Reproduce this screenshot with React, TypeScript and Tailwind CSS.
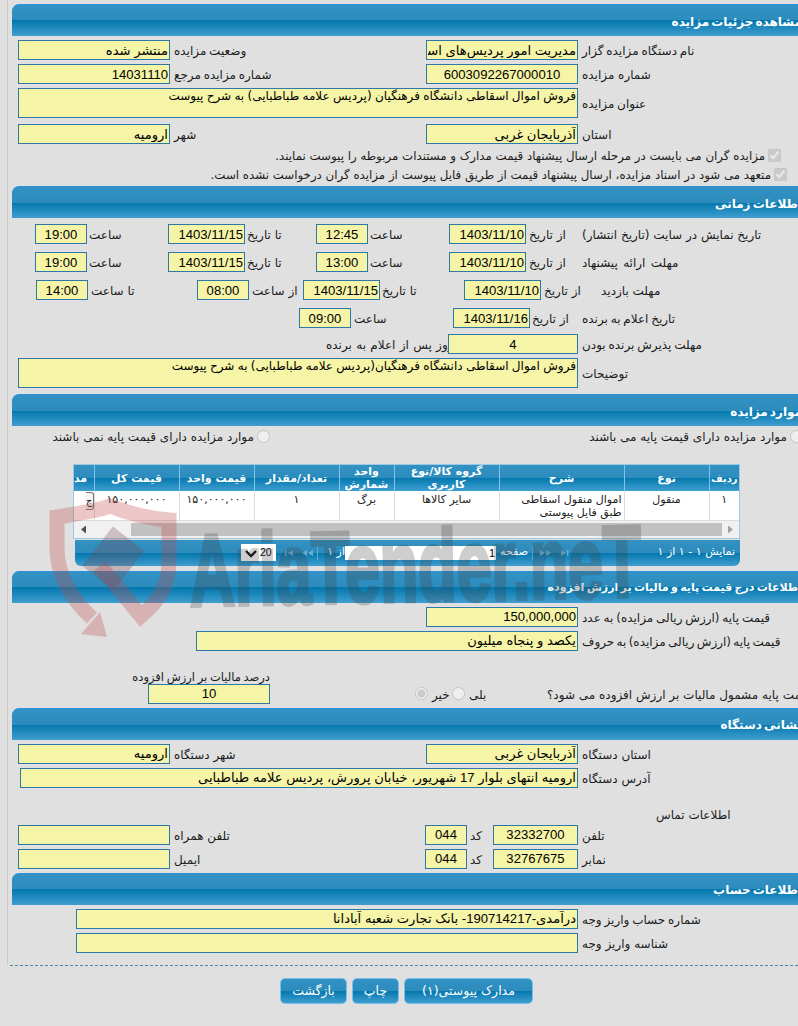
import React from 'react';

const BAR = 'bg-[linear-gradient(#3391c4,#2c8cbc_50%,#0377ae_50%,#409ecf)]';

function Header({ title, className = '', size = 'text-[12px] [word-spacing:-2px]' }: { title: string; className?: string; size?: string }) {
  return (
    <div dir="rtl" className={`ml-[4px] w-[802px] h-[32px] rounded-tl-[7px] border-t border-[#2a93dc] ${BAR} flex items-center pr-[12px] pt-[2px] text-white font-bold ${size} whitespace-nowrap ${className}`}>
      {title}
    </div>
  );
}

function F({ w, h = 'h-[20px]', v = '', c = false }: { w: string; h?: string; v?: string; c?: boolean }) {
  return (
    <input
      readOnly
      dir="rtl"
      value={v}
      className={`${w} ${h} shrink-0 border border-[#2c78a8] bg-[#f6f4a6] font-['Liberation_Sans','DejaVu_Sans',sans-serif] text-[13.1px] text-black outline-none px-[1px] ${c ? 'text-center' : 'text-right'}`}
    />
  );
}

function TA({ w, v }: { w: string; v: string }) {
  return (
    <textarea
      readOnly
      dir="rtl"
      value={v}
      className={`${w} h-[30px] shrink-0 border border-[#2c78a8] bg-[#f6f4a6] text-[12px] [word-spacing:-0.5px] leading-[14px] text-black outline-none px-[1px] resize-none overflow-hidden block`}
    />
  );
}

function L({ w = 'w-auto', children, p = 'pl-[4px]', s = '' }: { w?: string; children?: React.ReactNode; p?: string; s?: string }) {
  return (
    <div className={`${w} ${p} h-[20px] text-[12px] leading-[22px] shrink-0`}>
      <span dir="rtl" className={`inline-block whitespace-nowrap text-[#1c1c1c] ${s}`}>
        {children}
      </span>
    </div>
  );
}

function Row({ cls, children }: { cls: string; children: React.ReactNode }) {
  return <div className={`flex items-center ${cls}`}>{children}</div>;
}

function Radio({ checked = false }: { checked?: boolean }) {
  return <input type="radio" disabled checked={checked} readOnly className="m-0 w-[13px] h-[13px] shrink-0" />;
}

const thCls = `border-r border-[#7cc6ec] text-white font-bold text-[11px] leading-[13px] text-center align-middle px-[2px] ${BAR}`;
const tdCls = 'border-r border-b border-[#dcdcdc] bg-white text-[11px] leading-[13px] text-[#222] align-top pt-[2px] px-[2px]';

function Table() {
  return (
    <div className="ml-[65px] w-[667px] border border-[#9cc9e2] overflow-hidden">
      <table dir="ltr" className="table-fixed border-collapse w-[665px]">
        <colgroup>
          <col className="w-[20px]" />
          <col className="w-[85px]" />
          <col className="w-[75px]" />
          <col className="w-[85px]" />
          <col className="w-[55px]" />
          <col className="w-[105px]" />
          <col className="w-[125px]" />
          <col className="w-[85px]" />
          <col className="w-[30px]" />
        </colgroup>
        <thead>
          <tr className="h-[26px]" dir="rtl">
            <th className={`${thCls} overflow-hidden text-left !px-0`}><span className="whitespace-nowrap">مد</span></th>
            <th className={thCls}>قیمت کل</th>
            <th className={thCls}>قیمت واحد</th>
            <th className={thCls}>تعداد/مقدار</th>
            <th className={thCls}>واحد شمارش</th>
            <th className={thCls}>گروه کالا/نوع کاربری</th>
            <th className={thCls}>شرح</th>
            <th className={thCls}>نوع</th>
            <th className={`${thCls} border-r-0 !px-0 !text-[10px]`}>ردیف</th>
          </tr>
        </thead>
        <tbody>
          <tr className="h-[29px]" dir="rtl">
            <td className={`${tdCls} !p-0 overflow-hidden`}>
              <div className="mt-[1px] w-[8px] h-[18px] border border-l-0 border-[#777] rounded-r-[3px] bg-[#f4f4f4] text-[10px] leading-[16px] overflow-hidden">ج</div>
            </td>
            <td className={`${tdCls} text-center`}>۱۵۰,۰۰۰,۰۰۰</td>
            <td className={`${tdCls} text-center`}>۱۵۰,۰۰۰,۰۰۰</td>
            <td className={`${tdCls} text-center`}>۱</td>
            <td className={`${tdCls} text-center`}>برگ</td>
            <td className={`${tdCls} text-center`}>سایر کالاها</td>
            <td className={`${tdCls} text-right`}>اموال منقول اسقاطی<br />طبق فایل پیوستی</td>
            <td className={`${tdCls} text-center`}>منقول</td>
            <td className={`${tdCls} text-center border-r-0`}>۱</td>
          </tr>
        </tbody>
      </table>
      <div className="h-[17px] bg-[#f1f1f1] flex items-center">
        <svg width="57" height="17" className="shrink-0"><path d="M12 4.5 L7 8.5 L12 12.5 Z" fill="#505050" /></svg>
        <div className="w-[591px] h-[13px] bg-[#c1c1c1] shrink-0" />
        <svg width="17" height="17" className="shrink-0"><path d="M6 4.5 L11 8.5 L6 12.5 Z" fill="#a3a3a3" /></svg>
      </div>
    </div>
  );
}

function PagerIcon({ d }: { d: string }) {
  return <svg width="14" height="10" className="shrink-0"><path d={d} fill="#6fb0d4" /></svg>;
}

function Pager() {
  return (
    <div className={`mt-[1px] ml-[67px] w-[665px] h-[26px] rounded-b-[6px] ${BAR} flex items-center text-white text-[11px] whitespace-nowrap`}>
      <div className="ml-[166px] w-[35px] h-[17px] bg-white shrink-0 flex items-center text-black text-[10.5px] font-['Liberation_Sans',sans-serif]">
        <svg width="14" height="12" className="ml-[3px] shrink-0"><path d="M2 4 L7 9 L12 4" fill="none" stroke="#111" strokeWidth="2.4" /></svg>
        <span className="ml-[2px]">20</span>
      </div>
      <div className="ml-[7px]"><PagerIcon d="M2 2h1.5v6H2zM10 2v6L5 5z" /></div>
      <div className="ml-[3px]"><PagerIcon d="M7 2v6L2 5zM13 2v6L8 5z" /></div>
      <div className="ml-[3px] w-[1px] h-[14px] bg-[#5fa8cf] shrink-0" />
      <div dir="rtl" className="ml-[8px] w-[19px] shrink-0">از ۱</div>
      <div dir="rtl" className="w-[151px] h-[14px] bg-white text-black text-[11px] leading-[14px] text-right shrink-0 pr-[1px] font-['Liberation_Sans',sans-serif]">1</div>
      <div dir="rtl" className="w-[32px] shrink-0">صفحه</div>
      <div className="ml-[4px] w-[1px] h-[14px] bg-[#5fa8cf] shrink-0" />
      <div className="ml-[5px]"><PagerIcon d="M2 2v6l5-3zM8 2v6l5-3z" /></div>
      <div className="ml-[5px]"><PagerIcon d="M4 2v6l5-3zM10 2h1.5v6H10z" /></div>
      <div dir="rtl" className="ml-auto mr-[5px]">نمایش ۱ - ۱ از ۱</div>
    </div>
  );
}

function Watermark() {
  return (
    <svg width="798" height="1026" className="absolute left-0 top-0 pointer-events-none" aria-hidden="true">
      <g opacity="0.3">
        <path d="M92 618 C72 600 57 575 57 548 L57 517 C90 512 105 508 110 506 C125 512 145 518 169 520 L169 560 C169 585 160 600 141 616 L100 566" fill="none" stroke="#c04a4a" strokeWidth="15" />
        <path d="M81 634 L100 612 L107 637 Z" fill="#c04a4a" />
      </g>
      <g transform="rotate(38 112 560)" opacity="0.3">
        <rect x="92" y="533" width="40" height="50" fill="#7a4a52" />
      </g>
      <g opacity="0.25">
        <text x="190" y="606" transform="rotate(-1.2 190 606)" fontFamily="'Liberation Sans', sans-serif" fontWeight="700" fontSize="102" textLength="452" lengthAdjust="spacingAndGlyphs" fill="#3f3f3f" stroke="#3f3f3f" strokeWidth="4">
          AriaTender.neT
        </text>
      </g>
    </svg>
  );
}

function Btn({ w, cls = '', children }: { w: string; cls?: string; children: React.ReactNode }) {
  return (
    <button dir="rtl" className={`${w} ${cls} h-[26px] rounded-[5px] border border-[#74c0ea] ${BAR} text-white text-[12.5px] shrink-0`}>
      {children}
    </button>
  );
}

const cbText = 'h-[14px] flex items-center gap-[3px] text-[11.8px] text-[#1c1c1c] whitespace-nowrap';

export default function App() {
  return (
    <div className="relative w-[798px] h-[1026px] overflow-hidden bg-[#e0e0e0] font-['DejaVu_Sans','Liberation_Sans',sans-serif]">
      <div className="ml-[7px] border-l border-[#c8c8c8] pt-[4px] h-[965px] w-[900px]">
        <Header title="مشاهده جزئیات مزایده" />
        <Row cls="mt-[4px] pl-[10px]">
          <F w="w-[152px]" v="منتشر شده" /><L w="w-[256px]" s="[word-spacing:-1px]">وضعیت مزایده</L>
          <F w="w-[152px]" v="مدیریت امور پردیس‌های استان آذربایجان غربی" /><L s="[word-spacing:-1px]">نام دستگاه مزایده گزار</L>
        </Row>
        <Row cls="mt-[4px] pl-[10px]">
          <F w="w-[152px]" v="14031110" /><L w="w-[256px]" s="[word-spacing:-1px]">شماره مزایده مرجع</L>
          <F w="w-[152px]" v="6003092267000010" c /><L>شماره مزایده</L>
        </Row>
        <Row cls="mt-[4px] pl-[10px]">
          <TA w="w-[560px]" v="فروش اموال اسقاطی دانشگاه فرهنگیان (پردیس علامه طباطبایی) به شرح پیوست" /><L s="[word-spacing:-1px]">عنوان مزایده</L>
        </Row>
        <Row cls="mt-[6px] pl-[10px]">
          <F w="w-[152px]" v="ارومیه" /><L w="w-[256px]">شهر</L>
          <F w="w-[152px]" v="آذربایجان غربی" /><L>استان</L>
        </Row>
        <div dir="rtl" className={`mt-[4px] w-[773px] ${cbText}`}>
          <input type="checkbox" disabled checked readOnly className="m-0 w-[13px] h-[13px] shrink-0" />
          <span className="pt-[3px]">مزایده گران می بایست در مرحله ارسال پیشنهاد قیمت مدارک و مستندات مربوطه را پیوست نمایند.</span>
        </div>
        <div dir="rtl" className={`mt-[5px] w-[779px] ${cbText}`}>
          <input type="checkbox" disabled checked readOnly className="m-0 w-[13px] h-[13px] shrink-0" />
          <span className="pt-[3px]">متعهد می شود در اسناد مزایده، ارسال پیشنهاد قیمت از طریق فایل پیوست از مزایده گران درخواست نشده است.</span>
        </div>

        <Header title="اطلاعات زمانی" className="mt-[5px]" />
        <Row cls="mt-[6px] pl-[27px]">
          <F w="w-[52px]" v="19:00" c /><L w="w-[81px]" p="pl-[2px]">ساعت</L>
          <F w="w-[77px]" v="1403/11/15" /><L w="w-[71px]" p="pl-[2px]">تا تاریخ</L>
          <F w="w-[52px]" v="12:45" c /><L w="w-[81px]" p="pl-[2px]">ساعت</L>
          <F w="w-[77px]" v="1403/11/10" /><L w="w-[56px]" p="pl-[3px]">از تاریخ</L>
          <L p="pl-0">تاریخ نمایش در سایت (تاریخ انتشار)</L>
        </Row>
        <Row cls="mt-[8px] pl-[27px]">
          <F w="w-[52px]" v="19:00" c /><L w="w-[81px]" p="pl-[2px]">ساعت</L>
          <F w="w-[77px]" v="1403/11/15" /><L w="w-[71px]" p="pl-[2px]">تا تاریخ</L>
          <F w="w-[52px]" v="13:00" c /><L w="w-[81px]" p="pl-[2px]">ساعت</L>
          <F w="w-[77px]" v="1403/11/10" /><L w="w-[56px]" p="pl-[3px]">از تاریخ</L>
          <L p="pl-0" s="[word-spacing:1.5px]">مهلت ارائه پیشنهاد</L>
        </Row>
        <Row cls="mt-[8px] pl-[28px]">
          <F w="w-[52px]" v="14:00" c /><L w="w-[109px]" p="pl-[3px]">تا ساعت</L>
          <F w="w-[52px]" v="08:00" c /><L w="w-[54px]" p="pl-[3px]">از ساعت</L>
          <F w="w-[77px]" v="1403/11/15" /><L w="w-[84px]" p="pl-[2px]">تا تاریخ</L>
          <F w="w-[77px]" v="1403/11/10" /><L w="w-[60px]" p="pl-[3px]">از تاریخ</L>
          <L p="pl-0">مهلت بازدید</L>
        </Row>
        <Row cls="mt-[8px] pl-[291px]">
          <F w="w-[52px]" v="09:00" c /><L w="w-[102px]" p="pl-[3px]">ساعت</L>
          <F w="w-[77px]" v="1403/11/16" /><L w="w-[52px]" p="pl-[2px]">از تاریخ</L>
          <L p="pl-0" s="[word-spacing:-1px]">تاریخ اعلام به برنده</L>
        </Row>
        <Row cls="mt-[6px] pl-[314px]">
          <L w="w-[126px]" p="pl-[4px]" s="[word-spacing:0.5px]">روز پس از اعلام به برنده</L>
          <F w="w-[130px]" v="4" c /><L s="[word-spacing:-1px]">مهلت پذیرش برنده بودن</L>
        </Row>
        <Row cls="mt-[4px] pl-[10px]">
          <TA w="w-[560px]" v="فروش اموال اسقاطی دانشگاه فرهنگیان(پردیس علامه طباطبایی) به شرح پیوست" /><L>توضیحات</L>
        </Row>

        <Header title="موارد مزایده" className="mt-[6px]" />
        <div className="mt-[4px] h-[13px] flex items-center text-[12px] text-[#1c1c1c]">
          <div dir="rtl" className="ml-[47px] w-[215px] flex items-center gap-[3px] whitespace-nowrap shrink-0">
            <Radio /><span>موارد مزایده دارای قیمت پایه نمی باشند</span>
          </div>
          <div dir="rtl" className="ml-[320px] w-[213px] flex items-center gap-[3px] whitespace-nowrap shrink-0">
            <Radio /><span>موارد مزایده دارای قیمت پایه می باشند</span>
          </div>
        </div>
        <div className="mt-[21px]"><Table /></div>
        <Pager />

        <Header title="اطلاعات درج قیمت پایه و مالیات بر ارزش افزوده" className="mt-[5px]" size="text-[11px] [word-spacing:-1.5px]" />
        <Row cls="mt-[4px] pl-[418px]">
          <F w="w-[152px]" v="150,000,000" /><L s="[word-spacing:-1px]">قیمت پایه (ارزش ریالی مزایده) به عدد</L>
        </Row>
        <Row cls="mt-[4px] pl-[188px]">
          <F w="w-[382px]" v="یکصد و پنجاه میلیون" /><L s="[word-spacing:-1.5px]">قیمت پایه (ارزش ریالی مزایده) به حروف</L>
        </Row>
        <div className="mt-[20px] h-[33px] flex items-end">
          <div className="ml-[127px] w-[135px] shrink-0 flex flex-col items-end">
            <span dir="rtl" className="text-[11.5px] [word-spacing:-1px] leading-[13px] whitespace-nowrap text-[#1c1c1c]">درصد مالیات بر ارزش افزوده</span>
            <F w="w-[122px]" v="10" c />
          </div>
          <div className="flex items-center h-[20px] shrink-0">
            <div className="ml-[145px] flex"><Radio checked /></div>
            <L w="w-[24px]">خیر</L>
            <Radio />
            <L w="w-[82px]">بلی</L>
            <L p="pl-0">قیمت پایه مشمول مالیات بر ارزش افزوده می شود؟</L>
          </div>
        </div>

        <Header title="نشانی دستگاه" className="mt-[4px]" />
        <Row cls="mt-[4px] pl-[10px]">
          <F w="w-[152px]" v="ارومیه" /><L w="w-[256px]">شهر دستگاه</L>
          <F w="w-[152px]" v="آذربایجان غربی" /><L>استان دستگاه</L>
        </Row>
        <Row cls="mt-[4px] pl-[12px]">
          <F w="w-[558px]" v="ارومیه انتهای بلوار 17 شهریور، خیابان پرورش، پردیس علامه طباطبایی" /><L>آدرس دستگاه</L>
        </Row>
        <div className="mt-[20px] h-[14px] ml-[648px] flex items-center">
          <span dir="rtl" className="text-[12px] whitespace-nowrap text-[#1c1c1c]">اطلاعات تماس</span>
        </div>
        <Row cls="mt-[3px] pl-[10px]">
          <F w="w-[152px]" /><L w="w-[255px]">تلفن همراه</L>
          <F w="w-[42px]" v="044" c /><L w="w-[26px]" p="pl-[3px]">کد</L>
          <F w="w-[85px]" v="32332700" c /><L>تلفن</L>
        </Row>
        <Row cls="mt-[4px] pl-[10px]">
          <F w="w-[152px]" /><L w="w-[255px]">ایمیل</L>
          <F w="w-[42px]" v="044" c /><L w="w-[26px]" p="pl-[3px]">کد</L>
          <F w="w-[85px]" v="32767675" c /><L>نمابر</L>
        </Row>

        <Header title="اطلاعات حساب" className="mt-[4px]" />
        <Row cls="mt-[4px] pl-[68px]">
          <F w="w-[502px]" v="درآمدی-190714217- بانک تجارت شعبه آبادانا" /><L s="[word-spacing:-1px]">شماره حساب واریز وجه</L>
        </Row>
        <Row cls="mt-[4px] pl-[68px]">
          <F w="w-[502px]" /><L>شناسه واریز وجه</L>
        </Row>
      </div>
      <div className="ml-[10px] border-t border-dashed border-[#4c86ab]" />
      <div className="mt-[12px] pl-[280px] flex">
        <Btn w="w-[67px]">بازگشت</Btn>
        <Btn w="w-[47px]" cls="ml-[5px]">چاپ</Btn>
        <Btn w="w-[129px]" cls="ml-[5px]">مدارک پیوستی(۱)</Btn>
      </div>
      <Watermark />
    </div>
  );
}
